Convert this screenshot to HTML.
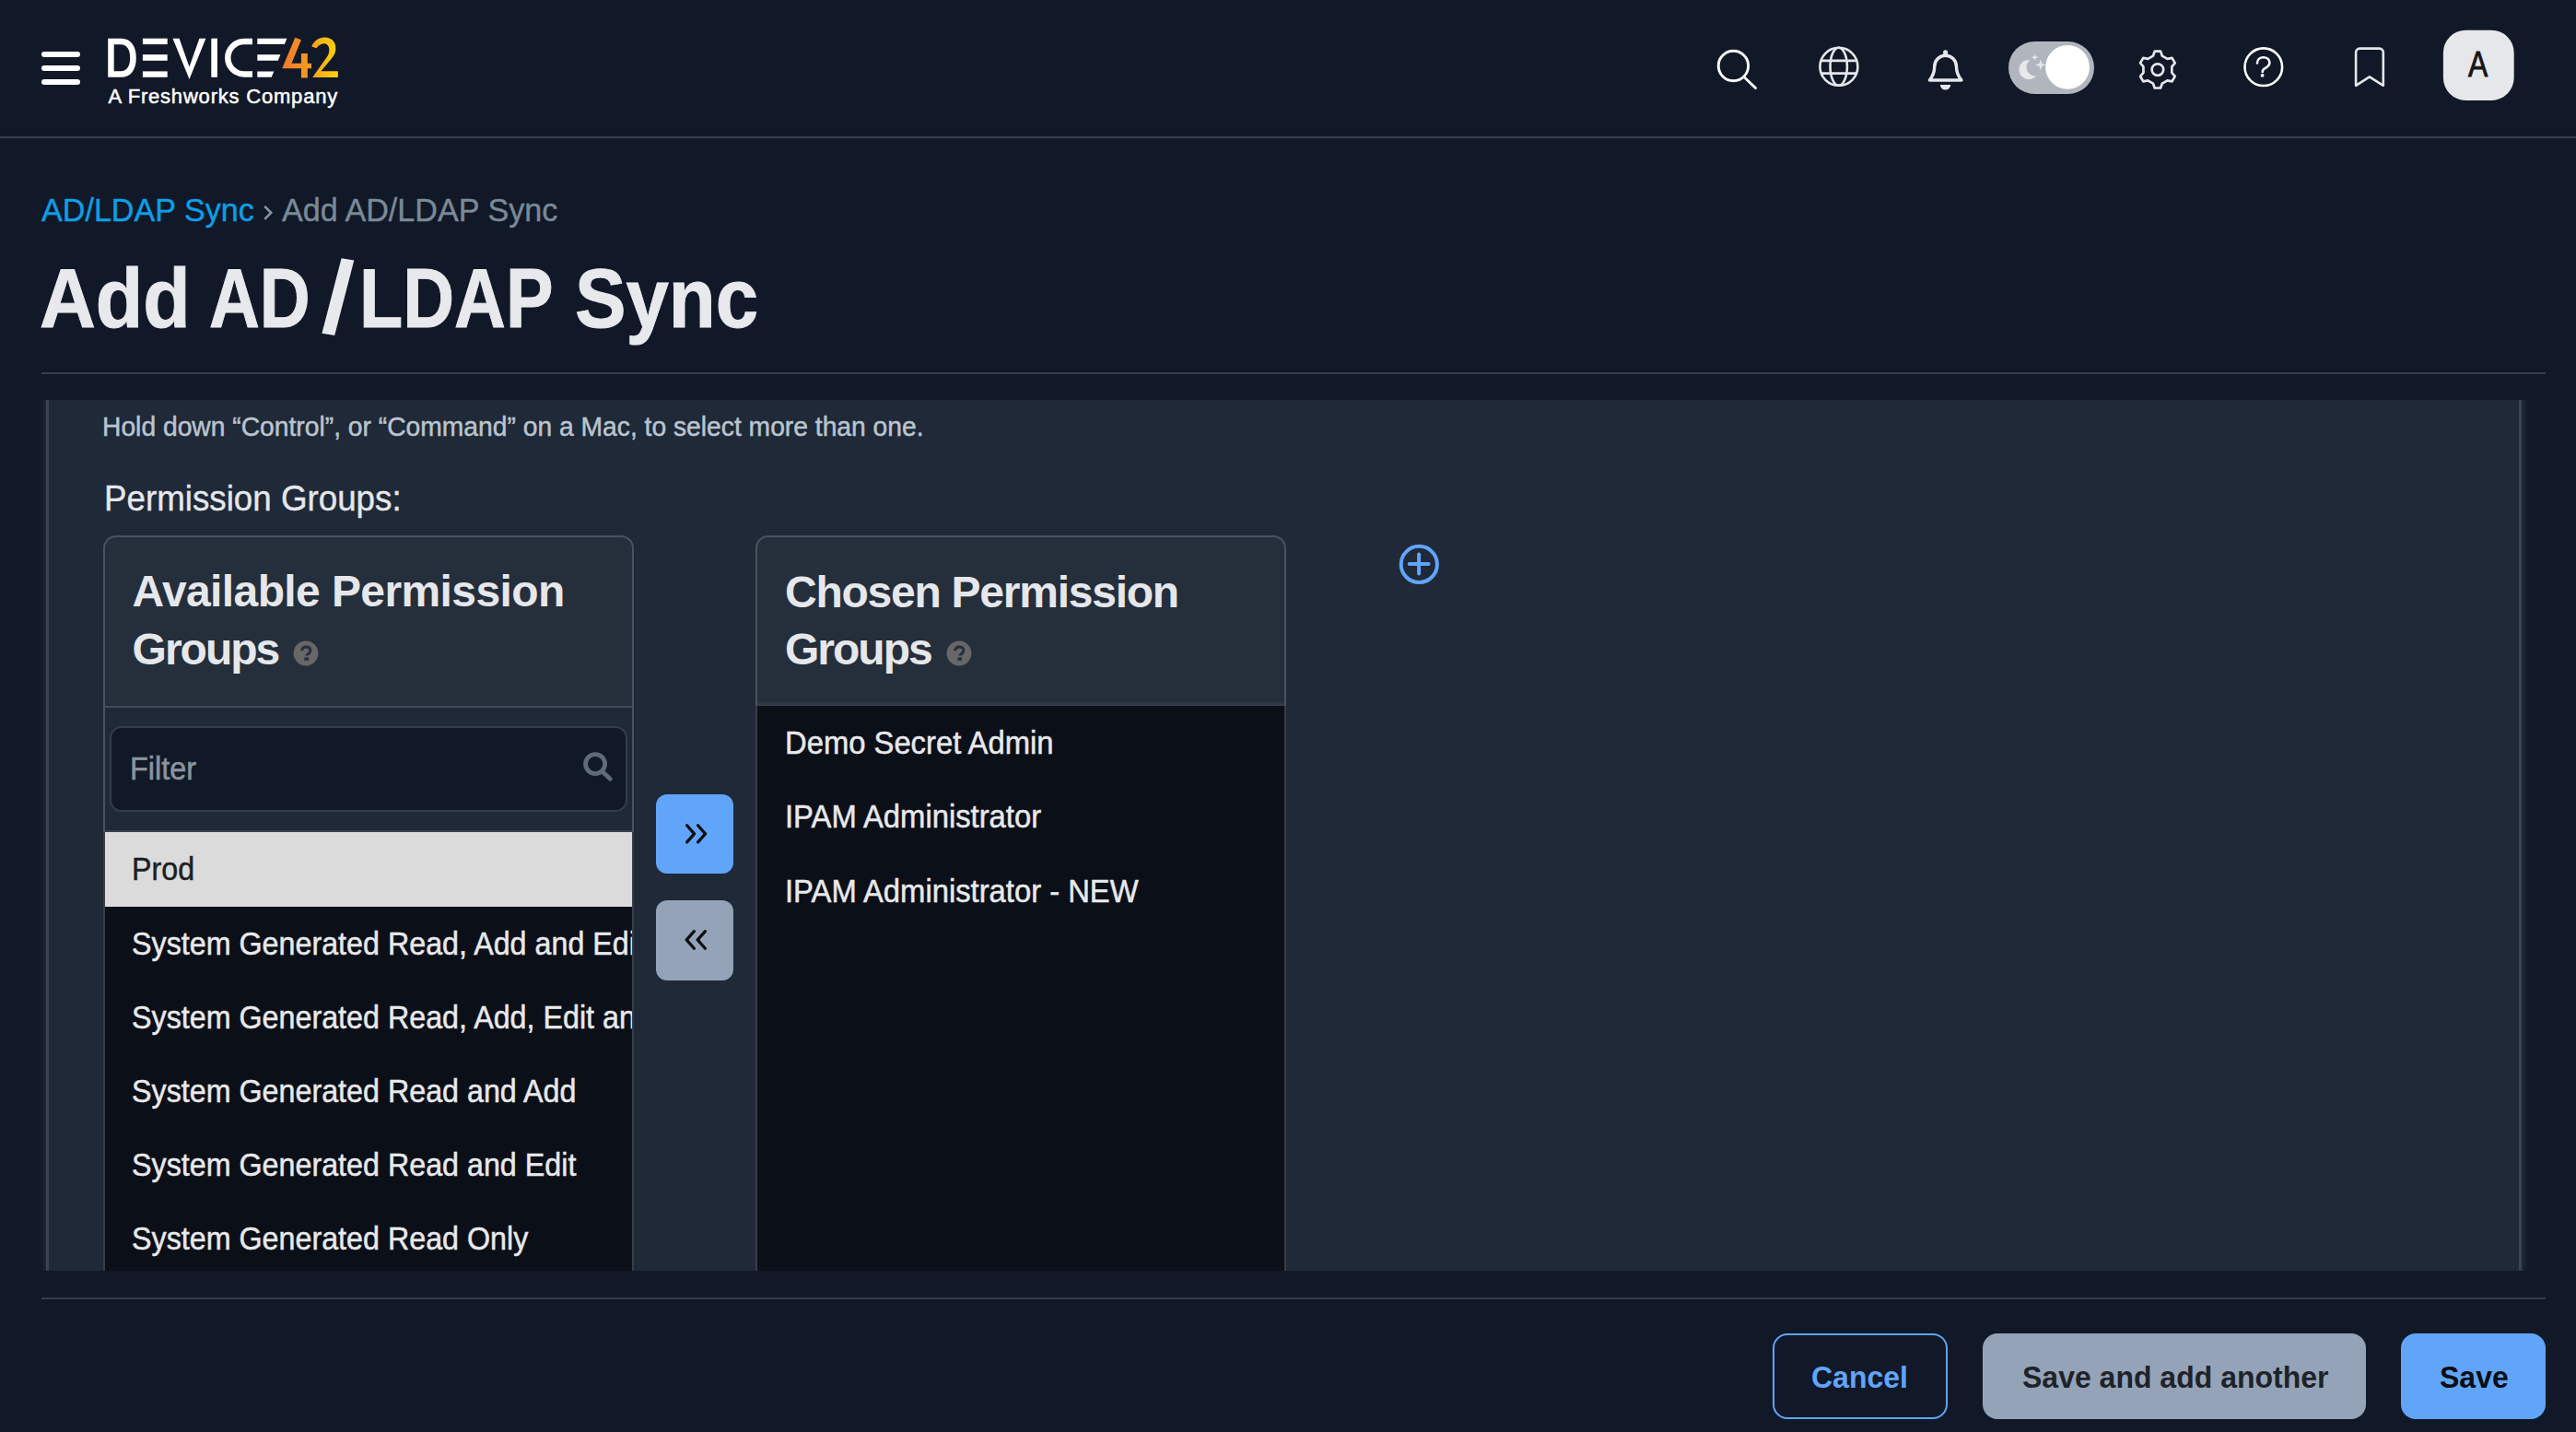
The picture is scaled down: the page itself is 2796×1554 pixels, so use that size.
<!DOCTYPE html>
<html><head><meta charset="utf-8"><title>Add AD/LDAP Sync</title>
<style>
html,body{margin:0;padding:0;}
body{width:2796px;height:1554px;overflow:hidden;background:#111827;position:relative;font-family:"Liberation Sans",sans-serif;}
.t{position:absolute;white-space:nowrap;}
.r{position:absolute;}
</style></head><body>
<div class="r" style="left:45px;top:55.9px;width:42.30px;height:6.10px;background:#fff;border-radius:3.05px"></div>
<div class="r" style="left:45px;top:70.9px;width:42.30px;height:6.10px;background:#fff;border-radius:3.05px"></div>
<div class="r" style="left:45px;top:85.9px;width:42.30px;height:6.10px;background:#fff;border-radius:3.05px"></div>
<svg class="r" style="left:0;top:0" width="400" height="150" viewBox="0 0 400 150">
<defs><linearGradient id="lg" x1="306" y1="0" x2="367" y2="0" gradientUnits="userSpaceOnUse">
<stop offset="0" stop-color="#ef782c"/><stop offset="0.5" stop-color="#f59c1f"/><stop offset="1" stop-color="#fdd50b"/></linearGradient></defs>
<path fill="#fff" fill-rule="evenodd" d="M117.2,41.7 H131.5 C142.5,41.7 147.8,50.5 147.8,62.7 C147.8,75 142.5,83.8 131.5,83.8 H117.2 Z M123.7,48.2 H131 C137.8,48.2 141.2,54 141.2,62.7 C141.2,71.5 137.8,77.3 131,77.3 H123.7 Z"/>
<rect fill="#fff" x="154.9" y="41.7" width="26.8" height="6.4"/>
<rect fill="#fff" x="154.9" y="59.2" width="26.8" height="6.6"/>
<rect fill="#fff" x="154.9" y="77.4" width="26.8" height="6.4"/>
<path fill="#fff" d="M187.5,41.7 H194.6 L205.5,72.5 L216.4,41.7 H223.4 L205.5,86 Z"/>
<rect fill="#fff" x="229.3" y="41.7" width="6.6" height="42.1"/>
<path fill="none" stroke="#fff" stroke-width="6.5" d="M274,45 H265 A17.7,17.7 0 0 0 265,80.4 H274"/>
<path fill="#fff" d="M279.3,41.7 H311.4 L308.9,48.1 H279.3 Z"/>
<path fill="#fff" d="M279.3,59.2 H304.4 L301.8,65.8 H279.3 Z"/>
<path fill="#fff" d="M279.3,77.4 H297.3 L294.7,83.8 H279.3 Z"/>
<path fill="url(#lg)" d="M320.3,40.8 L326.9,43.3 L316.5,68.8 H326.9 V58 H333.8 V68.8 H338 V74.2 H333.8 V84.5 H326.9 V74.2 H306.5 V73.6 Z"/>
<path fill="url(#lg)" d="M338.2,50.4 C341,44.2 346.2,40.6 352.6,40.6 C359.5,40.6 364.4,45.5 364.4,52.5 C364.4,57 362.5,60.5 359.5,64 L348.4,77.2 H366.8 V84 H339.5 V83.4 L354.2,62.8 C356.3,60 357.3,57.5 357.3,54 C357.3,50 354.8,47.3 351.6,47.3 C348.2,47.3 345.6,49.6 343.5,52.3 Z"/>
</svg>
<div class="t" style="left:117.5px;top:93.98px;font-size:22px;line-height:22px;color:#fff;font-weight:400;letter-spacing:0.8px;-webkit-text-stroke:0.5px #fff;">A Freshworks Company</div>
<svg class="r" style="left:1800px;top:0" width="996" height="150" viewBox="1800 0 996 150">
<g fill="none" stroke="#fff" stroke-width="2.9" stroke-linecap="round">
<circle cx="1881.4" cy="71.5" r="16.2"/>
<line x1="1893.2" y1="83.8" x2="1905.5" y2="95.5"/>
</g>
<g fill="none" stroke="#e5e7eb" stroke-width="2.6">
<circle cx="1995.9" cy="72.3" r="20.5"/>
<ellipse cx="1995.7" cy="72.3" rx="9.2" ry="20.5"/>
<line x1="1977" y1="65.9" x2="2014.8" y2="65.9"/>
<line x1="1977" y1="79.6" x2="2014.8" y2="79.6"/>
</g>
<g fill="none" stroke="#e5e7eb" stroke-width="3.4" stroke-linejoin="round">
<path d="M2094.4,87 C2097.5,83 2099.7,78.5 2099.7,72.5 C2099.7,65.5 2105,60.3 2111.6,60.3 C2118.2,60.3 2123.5,65.5 2123.5,72.5 C2123.5,78.5 2125.7,83 2129,87 Z"/>
</g>
<rect x="2109.1" y="54.2" width="5" height="6" rx="2.5" fill="#e5e7eb"/>
<path d="M2105.9,92 H2117.2 A5.65,5.6 0 0 1 2105.9,92 Z" fill="#e5e7eb"/>
<rect x="2180" y="45" width="93" height="57" rx="28.5" fill="#b1b6be"/>
<circle cx="2244.1" cy="72.9" r="23.9" fill="#fff"/>
<path d="M2203.6,65 A10.6,10.6 0 1 0 2210,82.5 A9.64,9.64 0 0 1 2203.6,65 Z" fill="#e6e8ec"/>
<path d="M2208.6,58.6 L2209.6,61.2 L2212.2,62.2 L2209.6,63.2 L2208.6,65.8 L2207.6,63.2 L2205,62.2 L2207.6,61.2 Z" fill="#e6e8ec"/>
<path d="M2214.8,64.5 L2216.2,69 L2220.7,70.4 L2216.2,71.8 L2214.8,76.3 L2213.4,71.8 L2208.9,70.4 L2213.4,69 Z" fill="#e6e8ec"/>
<g fill="none" stroke="#e5e7eb" stroke-width="2.7" stroke-linejoin="round">
<path id="gear" d="M2337.00,60.60 L2338.70,55.70 L2345.10,55.70 L2346.80,60.60 L2352.44,63.86 L2357.53,62.88 L2360.73,68.42 L2357.34,72.34 L2357.34,78.86 L2360.73,82.78 L2357.53,88.32 L2352.44,87.34 L2346.80,90.60 L2345.10,95.50 L2338.70,95.50 L2337.00,90.60 L2331.36,87.34 L2326.27,88.32 L2323.07,82.78 L2326.46,78.86 L2326.46,72.34 L2323.07,68.42 L2326.27,62.88 L2331.36,63.86 Z"/>
<circle cx="2341.9" cy="75.6" r="6.3"/>
</g>
<g fill="none" stroke="#fff" stroke-width="2.6" stroke-linecap="round">
<circle cx="2456.8" cy="72.7" r="20.3"/>
<path d="M2450,68.4 C2450,64.6 2453,62.2 2456.6,62.2 C2460.4,62.2 2463.4,64.6 2463.4,68 C2463.4,71.5 2460.8,72.8 2458.4,74.2 C2456.6,75.2 2455.7,76.3 2455.7,78"/>
</g>
<circle cx="2455.6" cy="81.8" r="1.9" fill="#fff"/>
<path d="M2557.1,92.8 V56.8 A4.2,4.2 0 0 1 2561.3,52.6 H2582.6 A4.2,4.2 0 0 1 2586.8,56.8 V92.8 L2571.9,83.3 Z" fill="none" stroke="#e5e7eb" stroke-width="2.6" stroke-linejoin="round"/>
<rect x="2651.9" y="32.7" width="76.8" height="76.2" rx="24.5" fill="#e5e7eb"/>
</svg>
<div class="t" style="left:2679.3px;top:51.13px;font-size:38px;line-height:38px;color:#151515;font-weight:400;letter-spacing:0px;transform:scaleX(0.84);transform-origin:0 0;-webkit-text-stroke:0.9px #151515;">A</div>
<div class="r" style="left:0px;top:148px;width:2796.00px;height:2.00px;background:#373d4a"></div>
<div class="t" style="left:44.5px;top:210.07px;font-size:35px;line-height:35px;color:#0c9fe6;font-weight:400;letter-spacing:0px;transform:scaleX(0.975);transform-origin:0 0;-webkit-text-stroke:0.4px #0c9fe6;">AD/LDAP Sync</div>
<svg class="r" style="left:280px;top:215px" width="22" height="30" viewBox="280 215 22 30"><path d="M287.2,223.8 L294.2,230.8 L287.2,237.8" fill="none" stroke="#8795a1" stroke-width="2.6"/></svg><div class="t" style="left:305.5px;top:210.07px;font-size:35px;line-height:35px;color:#7a8a97;font-weight:400;letter-spacing:0px;transform:scaleX(0.976);transform-origin:0 0;-webkit-text-stroke:0.4px #7a8a97;">Add AD/LDAP Sync</div>
<div class="t" style="left:43.2px;top:278.47px;font-size:91px;line-height:91px;color:#e8e9ed;font-weight:700;letter-spacing:0px;transform:scaleX(0.925);transform-origin:0 0;-webkit-text-stroke:1px #e8e9ed;">Add</div>
<div class="t" style="left:227.4px;top:278.47px;font-size:91px;line-height:91px;color:#e8e9ed;font-weight:700;letter-spacing:0px;transform:scaleX(0.835);transform-origin:0 0;-webkit-text-stroke:1px #e8e9ed;">AD</div>
<div class="t" style="left:390.3px;top:278.47px;font-size:91px;line-height:91px;color:#e8e9ed;font-weight:700;letter-spacing:0px;transform:scaleX(0.85);transform-origin:0 0;-webkit-text-stroke:1px #e8e9ed;">LDAP</div>
<div class="t" style="left:623.9px;top:278.47px;font-size:91px;line-height:91px;color:#e8e9ed;font-weight:700;letter-spacing:0px;transform:scaleX(0.915);transform-origin:0 0;-webkit-text-stroke:1px #e8e9ed;">Sync</div>
<svg class="r" style="left:340px;top:270px" width="60" height="110" viewBox="340 270 60 110"><path d="M370.6,280.3 L384.3,282.6 L363.2,364.1 L349.4,361.8 Z" fill="#e8e9ed"/></svg><div class="r" style="left:45px;top:404px;width:2718.00px;height:2.00px;background:#373d4a"></div>
<div class="r" style="left:45px;top:434px;width:2698.00px;height:945.00px;background:#1f2937"></div>
<div class="r" style="left:45px;top:434px;width:5.00px;height:945.00px;background:linear-gradient(90deg,#121927,#202734)"></div>
<div class="r" style="left:50px;top:434px;width:2.60px;height:945.00px;background:#3d4450"></div>
<div class="r" style="left:2734px;top:434px;width:2.60px;height:945.00px;background:#3d4450"></div>
<div class="r" style="left:2736.6px;top:434px;width:7.40px;height:945.00px;background:linear-gradient(90deg,#222936,#111827)"></div>
<div class="t" style="left:111px;top:447.60px;font-size:29.3px;line-height:29.3px;color:#bac4cf;font-weight:400;letter-spacing:0px;transform:scaleX(0.964);transform-origin:0 0;-webkit-text-stroke:0.5px #bac4cf;">Hold down &#8220;Control&#8221;, or &#8220;Command&#8221; on a Mac, to select more than one.</div>
<div class="t" style="left:112.5px;top:521.19px;font-size:39px;line-height:39px;color:#e5e7eb;font-weight:400;letter-spacing:0px;transform:scaleX(0.942);transform-origin:0 0;-webkit-text-stroke:0.4px #e5e7eb;">Permission Groups:</div>
<div class="r" style="left:112px;top:581px;width:576px;height:798px;overflow:hidden"><div class="r" style="left:0;top:0;width:572px;height:900px;border:2px solid #4a525e;border-top-left-radius:14px;border-top-right-radius:14px;background:#252e3b"></div></div><div class="r" style="left:114px;top:766px;width:572.00px;height:2.00px;background:#444c58"></div>
<div class="r" style="left:114px;top:768px;width:572.00px;height:133.00px;background:#1f2937"></div>
<div class="r" style="left:119.3px;top:787.8px;width:561.60px;height:93.00px;background:#111827;border:2px solid #353d4a;border-radius:13px;box-sizing:border-box"></div>
<div class="t" style="left:140.5px;top:816.37px;font-size:35px;line-height:35px;color:#8a949f;font-weight:400;letter-spacing:0px;transform:scaleX(0.926);transform-origin:0 0;-webkit-text-stroke:0.6px #8a949f;">Filter</div>
<svg class="r" style="left:600px;top:790px" width="80" height="80" viewBox="600 790 80 80">
<g fill="none" stroke="#5f6b7a" stroke-width="4.8" stroke-linecap="round"><circle cx="646.1" cy="829.1" r="10.5"/><line x1="654.2" y1="837.8" x2="662.3" y2="845.2"/></g></svg><div class="r" style="left:114px;top:901px;width:572.00px;height:2.00px;background:#3a414c"></div>
<div class="r" style="left:112px;top:903px;width:2.00px;height:476.00px;background:#3a3d42"></div>
<div class="r" style="left:114px;top:903px;width:572.00px;height:476.00px;background:#0b0f17"></div>
<div class="r" style="left:686px;top:903px;width:2.00px;height:476.00px;background:#3a3d42"></div>
<div class="r" style="left:114px;top:903px;width:572.00px;height:80.60px;background:#dbdbdb"></div>
<div class="r" style="left:114px;top:903px;width:572px;height:476px;overflow:hidden"><div class="t" style="left:29.3px;top:23.40px;font-size:34.5px;line-height:34.5px;color:#1c1f24;font-weight:400;letter-spacing:0px;transform:scaleX(0.935);transform-origin:0 0;-webkit-text-stroke:0.5px #1c1f24;">Prod</div>
<div class="t" style="left:29.3px;top:103.60px;font-size:34.5px;line-height:34.5px;color:#e8e9ec;font-weight:400;letter-spacing:0px;transform:scaleX(0.935);transform-origin:0 0;-webkit-text-stroke:0.5px #e8e9ec;">System Generated Read, Add and Edit</div>
<div class="t" style="left:29.3px;top:183.80px;font-size:34.5px;line-height:34.5px;color:#e8e9ec;font-weight:400;letter-spacing:0px;transform:scaleX(0.935);transform-origin:0 0;-webkit-text-stroke:0.5px #e8e9ec;">System Generated Read, Add, Edit and Delete</div>
<div class="t" style="left:29.3px;top:264.00px;font-size:34.5px;line-height:34.5px;color:#e8e9ec;font-weight:400;letter-spacing:0px;transform:scaleX(0.935);transform-origin:0 0;-webkit-text-stroke:0.5px #e8e9ec;">System Generated Read and Add</div>
<div class="t" style="left:29.3px;top:344.20px;font-size:34.5px;line-height:34.5px;color:#e8e9ec;font-weight:400;letter-spacing:0px;transform:scaleX(0.935);transform-origin:0 0;-webkit-text-stroke:0.5px #e8e9ec;">System Generated Read and Edit</div>
<div class="t" style="left:29.3px;top:424.40px;font-size:34.5px;line-height:34.5px;color:#e8e9ec;font-weight:400;letter-spacing:0px;transform:scaleX(0.935);transform-origin:0 0;-webkit-text-stroke:0.5px #e8e9ec;">System Generated Read Only</div>
</div><div class="t" style="left:143.6px;top:618.07px;font-size:48px;line-height:48px;color:#e5e7eb;font-weight:700;letter-spacing:-0.6px;">Available Permission</div>
<div class="t" style="left:143.6px;top:680.97px;font-size:48px;line-height:48px;color:#e5e7eb;font-weight:700;letter-spacing:-2.0px;">Groups</div>
<svg class="r" style="left:317.3px;top:693.9px" width="30" height="30" viewBox="0 0 30 30"><circle cx="15" cy="15" r="13.4" fill="#676767"/><path d="M10.6,12.2 C10.8,9.4 12.7,8 15.2,8 C18,8 19.8,9.6 19.8,11.9 C19.8,14 18.4,15 17,15.9 C16.2,16.4 15.9,16.9 15.9,17.6" fill="none" stroke="#252f3d" stroke-width="3"/><rect x="13.4" y="19.4" width="4.6" height="3.4" fill="#252f3d"/></svg>
<div class="r" style="left:820px;top:581px;width:576px;height:798px;overflow:hidden"><div class="r" style="left:0;top:0;width:572px;height:900px;border:2px solid #4a525e;border-top-left-radius:14px;border-top-right-radius:14px;background:#252e3b"></div></div><div class="r" style="left:822px;top:761px;width:572.00px;height:5.00px;background:linear-gradient(180deg,#252e3b,#3a424e)"></div>
<div class="r" style="left:820px;top:766px;width:2.00px;height:613.00px;background:#3a3d42"></div>
<div class="r" style="left:1394px;top:766px;width:2.00px;height:613.00px;background:#3a3d42"></div>
<div class="r" style="left:822px;top:766px;width:572.00px;height:613.00px;background:#0b0f17"></div>
<div class="t" style="left:851.5px;top:788.60px;font-size:34.5px;line-height:34.5px;color:#e8e9ec;font-weight:400;letter-spacing:0px;transform:scaleX(0.95);transform-origin:0 0;-webkit-text-stroke:0.5px #e8e9ec;">Demo Secret Admin</div>
<div class="t" style="left:851.5px;top:869.20px;font-size:34.5px;line-height:34.5px;color:#e8e9ec;font-weight:400;letter-spacing:0px;transform:scaleX(0.95);transform-origin:0 0;-webkit-text-stroke:0.5px #e8e9ec;">IPAM Administrator</div>
<div class="t" style="left:851.5px;top:949.80px;font-size:34.5px;line-height:34.5px;color:#e8e9ec;font-weight:400;letter-spacing:0px;transform:scaleX(0.95);transform-origin:0 0;-webkit-text-stroke:0.5px #e8e9ec;">IPAM Administrator - NEW</div>
<div class="t" style="left:852px;top:618.77px;font-size:48px;line-height:48px;color:#e5e7eb;font-weight:700;letter-spacing:-1.25px;">Chosen Permission</div>
<div class="t" style="left:852px;top:681.37px;font-size:48px;line-height:48px;color:#e5e7eb;font-weight:700;letter-spacing:-2.0px;">Groups</div>
<svg class="r" style="left:1025.5px;top:694.2px" width="30" height="30" viewBox="0 0 30 30"><circle cx="15" cy="15" r="13.4" fill="#676767"/><path d="M10.6,12.2 C10.8,9.4 12.7,8 15.2,8 C18,8 19.8,9.6 19.8,11.9 C19.8,14 18.4,15 17,15.9 C16.2,16.4 15.9,16.9 15.9,17.6" fill="none" stroke="#252f3d" stroke-width="3"/><rect x="13.4" y="19.4" width="4.6" height="3.4" fill="#252f3d"/></svg>
<div class="r" style="left:711.8px;top:861.8px;width:84.40px;height:86.40px;background:#60a5fa;border-radius:12px"></div>
<div class="r" style="left:711.8px;top:977px;width:84.40px;height:87.00px;background:#94a3b8;border-radius:12px"></div>
<svg class="r" style="left:700px;top:850px" width="110" height="230" viewBox="700 850 110 230">
<g fill="none" stroke="#0a0c10" stroke-width="3.2" stroke-linecap="round" stroke-linejoin="round">
<path d="M745.6,895.8 L753.6,904.9 L745.6,913.9"/><path d="M757.6,895.8 L765.6,904.9 L757.6,913.9"/>
<path d="M753.4,1010.6 L745.2,1019.9 L753.4,1029.2"/><path d="M765.4,1010.6 L757.2,1019.9 L765.4,1029.2"/>
</g></svg><svg class="r" style="left:1510px;top:582px" width="60" height="60" viewBox="1510 582 60 60">
<g fill="none" stroke="#60a5fa" stroke-width="4" stroke-linecap="round">
<circle cx="1540.3" cy="612.4" r="19.6"/><line x1="1529.7" y1="612" x2="1550.6" y2="612"/><line x1="1540.1" y1="601.6" x2="1540.1" y2="622.5"/>
</g></svg><div class="r" style="left:45px;top:1408px;width:2718.00px;height:2.00px;background:#373d4a"></div>
<div class="r" style="left:1924px;top:1447px;width:189.60px;height:93.00px;border:2.5px solid #60a5fa;border-radius:16px;box-sizing:border-box"></div>
<div class="r" style="left:2152px;top:1447px;width:416.00px;height:93.00px;background:#94a3b8;border-radius:16px"></div>
<div class="r" style="left:2606px;top:1447px;width:157.00px;height:93.00px;background:#60a5fa;border-radius:16px"></div>
<div class="t" style="left:1966.4px;top:1478.14px;font-size:33.5px;line-height:33.5px;color:#60a5fa;font-weight:700;letter-spacing:0px;transform:scaleX(0.955);transform-origin:0 0;">Cancel</div>
<div class="t" style="left:2194.7px;top:1478.14px;font-size:33.5px;line-height:33.5px;color:#1e2329;font-weight:700;letter-spacing:0px;transform:scaleX(0.955);transform-origin:0 0;">Save and add another</div>
<div class="t" style="left:2648px;top:1478.14px;font-size:33.5px;line-height:33.5px;color:#0b0e13;font-weight:700;letter-spacing:0px;transform:scaleX(0.955);transform-origin:0 0;">Save</div>

</body></html>
